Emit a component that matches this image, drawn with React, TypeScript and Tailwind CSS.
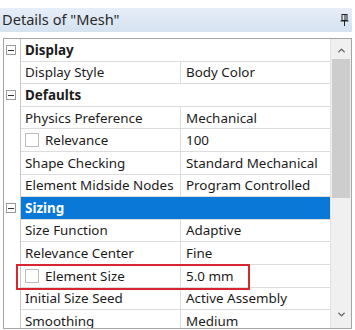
import { ChevronUp, ChevronDown } from 'lucide-react';

type Row =
  | { kind: 'group'; label: string; selected?: boolean }
  | { kind: 'prop'; label: string; value: string; check?: boolean };

const rows: Row[] = [
  { kind: 'group', label: 'Display' },
  { kind: 'prop', label: 'Display Style', value: 'Body Color' },
  { kind: 'group', label: 'Defaults' },
  { kind: 'prop', label: 'Physics Preference', value: 'Mechanical' },
  { kind: 'prop', label: 'Relevance', value: '100', check: true },
  { kind: 'prop', label: 'Shape Checking', value: 'Standard Mechanical' },
  { kind: 'prop', label: 'Element Midside Nodes', value: 'Program Controlled' },
  { kind: 'group', label: 'Sizing', selected: true },
  { kind: 'prop', label: 'Size Function', value: 'Adaptive' },
  { kind: 'prop', label: 'Relevance Center', value: 'Fine' },
  { kind: 'prop', label: 'Element Size', value: '5.0 mm', check: true },
  { kind: 'prop', label: 'Initial Size Seed', value: 'Active Assembly' },
  { kind: 'prop', label: 'Smoothing', value: 'Medium' },
];

function MinusBox() {
  return (
    <div className="w-[10px] h-[10px] border border-[#9a9a9a] bg-white flex items-center justify-center">
      <div className="w-[6px] h-px bg-[#333]" />
    </div>
  );
}

function PinIcon() {
  return (
    <svg width="9" height="12" viewBox="0 0 9 12" className="text-[#222]">
      <rect x="2" y="0.5" width="5" height="6" fill="none" stroke="currentColor" />
      <line x1="0.5" y1="7" x2="8.5" y2="7" stroke="currentColor" />
      <line x1="4.5" y1="7" x2="4.5" y2="12" stroke="currentColor" />
      <line x1="5" y1="1" x2="5" y2="6" stroke="currentColor" />
    </svg>
  );
}

export default function App() {
  return (
    <div
      className="relative w-[355px] h-[330px] bg-white overflow-hidden text-[13.4px] text-[#1b1b1b]"
      style={{ fontFamily: '"Noto Sans", "Open Sans", sans-serif' }}
    >
      <div className="h-[8px] bg-white" />
      <div className="h-[24px] w-[352px] flex items-center justify-between pl-[2px] pr-[3px] bg-gradient-to-b from-[#e6eef8] to-[#d5e2f0]">
        <span className="text-[14.6px] text-[#2a2a2a]">Details of "Mesh"</span>
        <PinIcon />
      </div>
      <div className="h-[6px] bg-white" />

      <div className="ml-[3px] w-[349px] h-[291px] border border-[#a5a5a5] flex overflow-hidden">
        <div className="flex-1 flex flex-col">
          {rows.map((r, i) => (
            <div key={i} className="flex h-[22.6px] shrink-0">
              <div className="w-[17px] shrink-0 border-r border-[#c8c8c8] flex items-center justify-center pr-[2px]">
                {r.kind === 'group' && <MinusBox />}
              </div>
              {r.kind === 'group' ? (
                <div
                  className={`flex-1 flex items-center pl-[4px] font-bold border-b border-[#dcdcdc] ${
                    r.selected ? 'bg-[#0a78d7] text-white' : 'bg-white'
                  }`}
                >
                  {r.label}
                </div>
              ) : (
                <div className="flex-1 flex border-b border-[#dcdcdc]">
                  <div className="w-[160px] shrink-0 flex items-center pl-[4px] gap-[6px] border-r border-[#dcdcdc] whitespace-nowrap overflow-hidden">
                    {r.check && <div className="w-[14px] h-[14px] border border-[#bdbdbd] bg-white shrink-0" />}
                    {r.label}
                  </div>
                  <div className="flex-1 flex items-center pl-[5px] whitespace-nowrap">{r.value}</div>
                </div>
              )}
            </div>
          ))}
        </div>
        <div className="w-[21px] shrink-0 bg-[#f0f0f0] border-l border-[#e2e2e2] flex flex-col items-center">
          <ChevronUp className="w-[11px] h-[11px] mt-[6px] text-[#606060]" strokeWidth={3} />
          <div className="w-[18px] h-[139px] bg-[#cdcdcd] mt-[3px]" />
          <div className="flex-1" />
          <ChevronDown className="w-[11px] h-[11px] mb-[8px] text-[#606060]" strokeWidth={3} />
        </div>
      </div>

      <div className="absolute left-[16px] top-[264px] w-[234px] h-[26px] border-[2.5px] border-[#d7262f]" />
    </div>
  );
}
